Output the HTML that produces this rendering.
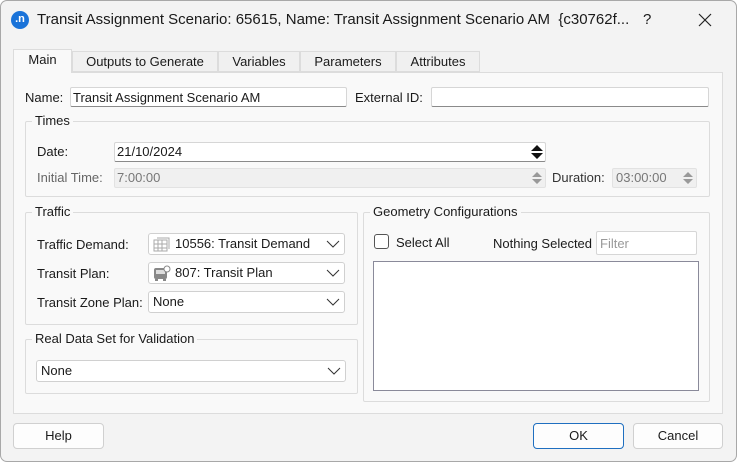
<!DOCTYPE html>
<html><head><style>
*{box-sizing:border-box;margin:0;padding:0}
body{width:737px;height:462px;overflow:hidden;background:#fff;font-family:"Liberation Sans",sans-serif;font-size:13px;color:#1a1a1a;position:relative}
.win{position:absolute;left:0;top:0;width:737px;height:462px;background:#f3f3f3;box-shadow:inset 0 0 0 1px #a8a8a8;border-radius:7px;overflow:hidden}
.a{position:absolute}
.t{position:absolute;white-space:nowrap;line-height:14px}
.inp{position:absolute;background:#fff;border:1px solid #d6d6d6;border-bottom:1px solid #8a8a8a;border-radius:2px}
.dis{background:#f0f0f0;border:1px solid #e2e2e2}
.grp{position:absolute;border:1px solid #dcdcdc;border-radius:2px}
.gl{position:absolute;background:#f9f9f9;padding:0 3px;top:-8px;left:8px;line-height:14px}
.tab{position:absolute;top:51px;height:21px;border:1px solid #dcdcdc;background:#f0f0f0;text-align:center;line-height:20px}
.combo{position:absolute;background:#fff;border:1px solid #d0d0d0;border-radius:3px}
.combo .v{position:absolute;left:4px;top:3px;line-height:14px}
.chev{position:absolute;right:4px;top:4px}
.btn{position:absolute;top:423px;height:26px;background:#fdfdfd;border:1px solid #d0d0d0;border-radius:4px;text-align:center;line-height:24px}
</style></head><body>
<div class="win">
<div class="a" style="left:11px;top:11px;width:18px;height:18px;border-radius:9px;background:#1a73d9;color:#fff;font-size:11px;font-weight:bold;text-align:center;line-height:17px">.n</div>
<div class="t" style="left:37px;top:11px;font-size:15px;line-height:18px">Transit Assignment Scenario: 65615, Name: Transit Assignment Scenario AM &nbsp;{c30762f...</div>
<div class="t" style="left:643px;top:11px;font-size:15px;line-height:18px">?</div>
<svg class="a" style="left:698px;top:13px" width="14" height="14"><path d="M1 1L13 13M13 1L1 13" stroke="#222" stroke-width="1.2"/></svg>

<div class="a" style="left:13px;top:72px;width:710px;height:342px;background:#f9f9f9;border:1px solid #dcdcdc"></div>
<div class="tab" style="left:13px;width:59px;top:49px;height:24px;background:#f9f9f9;border-bottom:none">Main</div>
<div class="tab" style="left:72px;width:146px">Outputs to Generate</div>
<div class="tab" style="left:218px;width:82px">Variables</div>
<div class="tab" style="left:300px;width:96px">Parameters</div>
<div class="tab" style="left:396px;width:84px">Attributes</div>

<div class="t" style="left:25px;top:91px">Name:</div>
<div class="inp" style="left:70px;top:87px;width:277px;height:20px"></div>
<div class="t" style="left:73px;top:91px">Transit Assignment Scenario AM</div>
<div class="t" style="left:355px;top:91px">External ID:</div>
<div class="inp" style="left:431px;top:87px;width:278px;height:20px"></div>

<div class="grp" style="left:25px;top:121px;width:685px;height:76px"><div class="gl" style="left:6px">Times</div></div>
<div class="t" style="left:37px;top:145px">Date:</div>
<div class="inp" style="left:114px;top:142px;width:432px;height:20px"></div>
<div class="t" style="left:117px;top:145px">21/10/2024</div>
<svg class="a" style="left:530px;top:144px" width="14" height="16"><path d="M1 7L7 1L13 7Z M1 9L13 9L7 15Z" fill="#111"/></svg>
<div class="t" style="left:37px;top:171px;color:#666">Initial Time:</div>
<div class="inp dis" style="left:114px;top:168px;width:432px;height:20px"></div>
<div class="t" style="left:117px;top:171px;color:#777">7:00:00</div>
<svg class="a" style="left:530px;top:170px" width="14" height="16"><path d="M2 7L7 2L12 7Z M2 9L12 9L7 14Z" fill="#999"/></svg>
<div class="t" style="left:552px;top:171px;color:#333">Duration:</div>
<div class="inp dis" style="left:612px;top:168px;width:85px;height:20px"></div>
<div class="t" style="left:616px;top:171px;color:#777">03:00:00</div>
<svg class="a" style="left:681px;top:170px" width="14" height="16"><path d="M2 7L7 2L12 7Z M2 9L12 9L7 14Z" fill="#999"/></svg>

<div class="grp" style="left:25px;top:212px;width:333px;height:113px"><div class="gl" style="left:6px">Traffic</div></div>
<div class="t" style="left:37px;top:238px">Traffic Demand:</div>
<div class="t" style="left:37px;top:267px">Transit Plan:</div>
<div class="t" style="left:37px;top:296px">Transit Zone Plan:</div>
<div class="combo" style="left:148px;top:233px;width:197px;height:22px">
<svg class="a" style="left:4px;top:3px" width="18" height="15"><g stroke="#aaa" fill="none"><rect x="1" y="3" width="13" height="11"/><path d="M5 3V14M9 3V14M1 7H14M1 11H14M4 1H16V12"/></g></svg>
<div class="v" style="left:26px">10556: Transit Demand</div>
<svg class="chev" width="14" height="12"><path d="M1 3L7 9L13 3" stroke="#333" fill="none"/></svg></div>
<div class="combo" style="left:148px;top:262px;width:197px;height:22px">
<svg class="a" style="left:4px;top:2px" width="18" height="17"><rect x="1" y="3" width="13" height="11" rx="2" fill="#888"/><rect x="3" y="5" width="9" height="4" fill="#ddd"/><circle cx="14" cy="4" r="3" fill="#fff" stroke="#888"/><rect x="2" y="14" width="3" height="2" fill="#888"/><rect x="10" y="14" width="3" height="2" fill="#888"/></svg>
<div class="v" style="left:26px">807: Transit Plan</div>
<svg class="chev" width="14" height="12"><path d="M1 3L7 9L13 3" stroke="#333" fill="none"/></svg></div>
<div class="combo" style="left:148px;top:291px;width:197px;height:22px"><div class="v">None</div>
<svg class="chev" width="14" height="12"><path d="M1 3L7 9L13 3" stroke="#333" fill="none"/></svg></div>

<div class="grp" style="left:25px;top:339px;width:333px;height:55px"><div class="gl" style="left:6px">Real Data Set for Validation</div></div>
<div class="combo" style="left:36px;top:360px;width:310px;height:22px"><div class="v">None</div>
<svg class="chev" width="14" height="12"><path d="M1 3L7 9L13 3" stroke="#333" fill="none"/></svg></div>

<div class="grp" style="left:363px;top:212px;width:347px;height:190px"><div class="gl" style="left:6px">Geometry Configurations</div></div>
<div class="a" style="left:374px;top:234px;width:15px;height:15px;border:1px solid #555;border-radius:3px;background:#fff"></div>
<div class="t" style="left:396px;top:236px">Select All</div>
<div class="t" style="left:493px;top:237px">Nothing Selected</div>
<div class="inp" style="left:596px;top:231px;width:101px;height:24px;border-bottom-color:#d6d6d6"></div>
<div class="t" style="left:600px;top:237px;color:#999">Filter</div>
<div class="a" style="left:373px;top:261px;width:326px;height:130px;background:#fff;border:1px solid #8a8a9a"></div>

<div class="btn" style="left:13px;width:91px">Help</div>
<div class="btn" style="left:533px;width:91px;border-color:#1f6fc0">OK</div>
<div class="btn" style="left:633px;width:90px">Cancel</div>
</div>
</body></html>
